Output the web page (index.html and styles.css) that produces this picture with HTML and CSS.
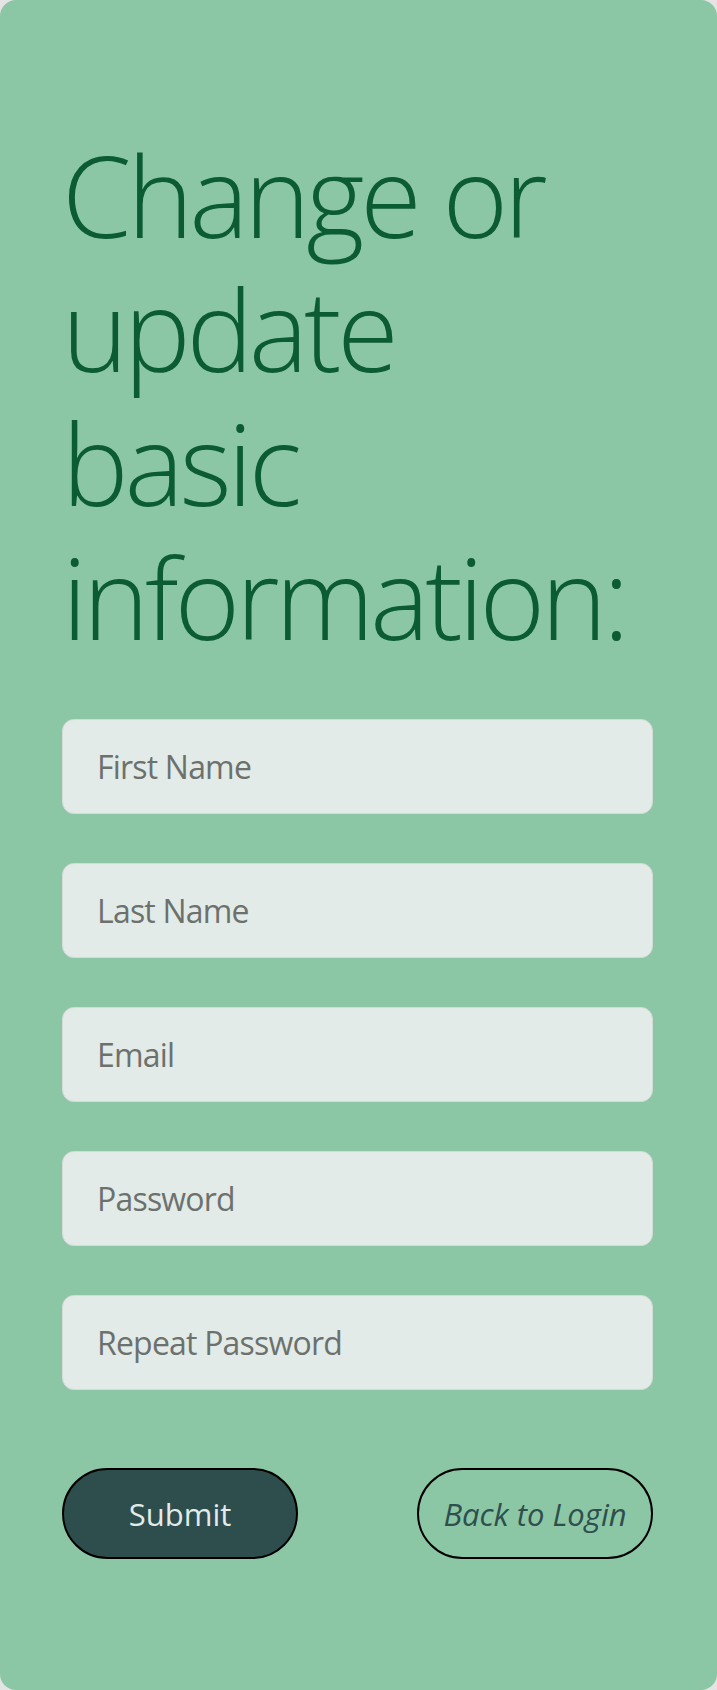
FILE: index.html
```html
<!DOCTYPE html>
<html lang="en">
<head>
<meta charset="utf-8">
<title>Update information</title>
<link rel="stylesheet" href="styles.css">
</head>
<body>
<main class="card">
  <h1 class="title">Change or update basic information:</h1>
  <form class="form">
    <input class="field" type="text" placeholder="First Name">
    <input class="field" type="text" placeholder="Last Name">
    <input class="field" type="email" placeholder="Email">
    <input class="field" type="password" placeholder="Password">
    <input class="field" type="password" placeholder="Repeat Password">
    <div class="actions">
      <button class="btn btn-primary" type="submit">Submit</button>
      <button class="btn btn-outline" type="button">Back to Login</button>
    </div>
  </form>
</main>
</body>
</html>
```
FILE: styles.css
```css
html, body {
  margin: 0;
  padding: 0;
}
body {
  background: #e4e4e4;
  font-family: "Open Sans", "Noto Sans", sans-serif;
}
.card {
  box-sizing: border-box;
  min-height: 1690px;
  background: #8cc7a5;
  border-radius: 16px;
  padding: 128px 64px 60px 62px;
}
.title {
  margin: 0 0 55px 0;
  font-weight: 300;
  font-size: 112px;
  line-height: 134px;
  color: #0b5b33;
  letter-spacing: -4.2px;
}
.form {
  display: flex;
  flex-direction: column;
  gap: 49px;
}
.field {
  box-sizing: border-box;
  width: 100%;
  height: 95px;
  border: 1px solid #d2dbd6;
  border-radius: 12px;
  background: #e2ebe7;
  padding: 0 34px;
  font-family: "Open Sans", "Noto Sans", sans-serif;
  font-size: 32px;
  letter-spacing: -0.8px;
  color: #333;
  outline: none;
}
.field::placeholder {
  color: #6d716e;
}
.actions {
  display: flex;
  justify-content: space-between;
  margin-top: 29px;
}
.btn {
  box-sizing: border-box;
  width: 236px;
  height: 91px;
  border: 2px solid #000;
  border-radius: 46px;
  font-family: "Open Sans", "Noto Sans", sans-serif;
  font-size: 31px;
  cursor: pointer;
}
.btn-primary {
  background: #2e4d4d;
  color: #e2ebe7;
}
.btn-outline {
  background: transparent;
  color: #2f4f4f;
  font-style: italic;
}
```
